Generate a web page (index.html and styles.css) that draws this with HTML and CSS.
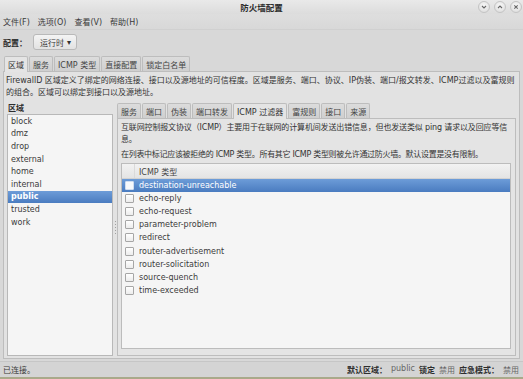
FILE: index.html
```html
<!DOCTYPE html>
<html lang="zh-CN">
<head>
<meta charset="utf-8">
<title>防火墙配置</title>
<link rel="stylesheet" href="styles.css">
</head>
<body>
<div class="window">
  <div class="titlebar">
    <span class="title">防火墙配置</span>
    <div class="wbtns">
      <span class="wbtn"><svg viewBox="0 0 10 10" width="10" height="10"><path d="M3 4 L5 6 L7 4" fill="none" stroke="#666" stroke-width="1.1"/></svg></span>
      <span class="wbtn"><svg viewBox="0 0 10 10" width="10" height="10"><path d="M3 6 L5 4 L7 6" fill="none" stroke="#666" stroke-width="1.1"/></svg></span>
      <span class="wbtn"><svg viewBox="0 0 10 10" width="10" height="10"><path d="M3.3 3.3 L6.7 6.7 M6.7 3.3 L3.3 6.7" fill="none" stroke="#666" stroke-width="1.1"/></svg></span>
    </div>
  </div>
  <div class="menubar">
    <span class="mi">文件(F)</span>
    <span class="mi">选项(O)</span>
    <span class="mi">查看(V)</span>
    <span class="mi">帮助(H)</span>
  </div>
  <div class="toolbar">
    <span class="lbl">配置：</span>
    <span class="combo">运行时 <span class="arrow">▾</span></span>
  </div>
  <div class="tabs">
    <span class="tab active">区域</span>
    <span class="tab">服务</span>
    <span class="tab">ICMP 类型</span>
    <span class="tab">直接配置</span>
    <span class="tab">锁定白名单</span>
  </div>
  <div class="panel">
    <p class="desc">FirewallD 区域定义了绑定的网络连接、接口以及源地址的可信程度。区域是服务、端口、协议、IP伪装、端口/报文转发、ICMP过滤以及富规则的组合。区域可以绑定到接口以及源地址。</p>
    <div class="paned">
      <div class="left">
        <div class="zlabel">区域</div>
        <div class="zlist">
          <div class="zrow">block</div>
          <div class="zrow">dmz</div>
          <div class="zrow">drop</div>
          <div class="zrow">external</div>
          <div class="zrow">home</div>
          <div class="zrow">internal</div>
          <div class="zrow sel">public</div>
          <div class="zrow">trusted</div>
          <div class="zrow">work</div>
        </div>
      </div>
      <div class="handle"><span class="grip"></span></div>
      <div class="right">
        <div class="tabs inner">
          <span class="tab">服务</span>
          <span class="tab">端口</span>
          <span class="tab">伪装</span>
          <span class="tab">端口转发</span>
          <span class="tab active">ICMP 过滤器</span>
          <span class="tab">富规则</span>
          <span class="tab">接口</span>
          <span class="tab">来源</span>
        </div>
        <div class="rpanel">
          <p class="rdesc">互联网控制报文协议（ICMP）主要用于在联网的计算机间发送出错信息，但也发送类似 ping 请求以及回应等信息。</p>
          <p class="rdesc2">在列表中标记应该被拒绝的 ICMP 类型。所有其它 ICMP 类型则被允许通过防火墙。默认设置是没有限制。</p>
          <div class="tree">
            <div class="thead"><span class="tcheck"></span><span class="tcol">ICMP 类型</span></div>
            <div class="trow sel"><span class="cb"></span>destination-unreachable</div>
            <div class="trow"><span class="cb"></span>echo-reply</div>
            <div class="trow"><span class="cb"></span>echo-request</div>
            <div class="trow"><span class="cb"></span>parameter-problem</div>
            <div class="trow"><span class="cb"></span>redirect</div>
            <div class="trow"><span class="cb"></span>router-advertisement</div>
            <div class="trow"><span class="cb"></span>router-solicitation</div>
            <div class="trow"><span class="cb"></span>source-quench</div>
            <div class="trow"><span class="cb"></span>time-exceeded</div>
          </div>
        </div>
      </div>
    </div>
  </div>
  <div class="statusbar">
    <span class="status">已连接。</span>
    <span class="sright"><b>默认区域：</b><span class="val">public</span><b>锁定</b><span class="val">禁用</span><b>应急模式：</b><span class="val">禁用</span></span>
  </div>
</div>
</body>
</html>
```

FILE: styles.css
```css
* { box-sizing: border-box; }
html, body { margin: 0; padding: 0; }
body {
  width: 523px;
  height: 379px;
  overflow: hidden;
  font-family: "DejaVu Sans", "Noto Sans CJK SC", sans-serif;
  font-size: 8px;
  color: #3a3a3a;
  background: #d6d6d6;
}
.window {
  width: 523px;
  height: 379px;
  display: flex;
  flex-direction: column;
  background: #d8d8d8;
  border-bottom: 2px solid #a9a98a;
}
.titlebar {
  height: 14px;
  flex: none;
  position: relative;
  display: flex;
  align-items: center;
  justify-content: center;
  background: linear-gradient(#e9e9e9, #dcdcdc);
}
.title { font-weight: bold; color: #2e2e2e; font-size: 8.5px; }
.wbtns {
  position: absolute;
  right: 1px;
  top: 1px;
  display: flex;
  gap: 4px;
}
.wbtn {
  width: 12px;
  height: 12px;
  border-radius: 50%;
  background: radial-gradient(circle at 50% 35%, #f8f8f8, #d9d9d9);
  border: 1px solid #c4c4c4;
  display: flex;
  align-items: center;
  justify-content: center;
}
.menubar {
  height: 16px;
  flex: none;
  display: flex;
  align-items: center;
  gap: 8px;
  padding-left: 3px;
  background: linear-gradient(#dedede, #d8d8d8);
  border-bottom: 1px solid #d0d0d0;
}
.toolbar {
  height: 24px;
  flex: none;
  display: flex;
  align-items: center;
  padding-left: 3px;
  gap: 6px;
}
.lbl { font-weight: bold; color: #2e2e2e; }
.combo {
  height: 16px;
  padding: 0 5px 0 6px;
  display: flex;
  align-items: center;
  gap: 3px;
  border: 1px solid #b9b9b9;
  border-radius: 3px;
  background: linear-gradient(#f4f4f4, #e2e2e2);
}
.arrow { font-size: 8px; color: #333; }
.tabs {
  height: 16px;
  flex: none;
  display: flex;
  align-items: flex-end;
  padding-left: 4px;
  gap: 1px;
  margin-top: 1px;
}
.tab {
  height: 15px;
  padding: 0 3px;
  display: flex;
  align-items: center;
  border: 1px solid #bdbdbd;
  border-bottom: none;
  border-radius: 2px 2px 0 0;
  background: linear-gradient(#dcdcdc, #cfcfcf);
  color: #444;
}
.tab.active {
  height: 16px;
  background: #e4e4e4;
  position: relative;
  top: 1px;
  color: #333;
}
.panel {
  flex: 1;
  margin: 0 3px 2px 3px;
  border: 1px solid #bdbdbd;
  background: #e2e2e2;
  display: flex;
  flex-direction: column;
  padding: 3px 2px 2px 2px;
}
.desc {
  margin: 0;
  line-height: 12px;
  color: #333;
}
.paned {
  flex: 1;
  display: flex;
  margin-top: 1px;
}
.left {
  width: 106px;
  flex: none;
  display: flex;
  flex-direction: column;
  margin-left: 1px;
}
.zlabel {
  height: 14px;
  font-weight: bold;
  display: flex;
  align-items: center;
  padding-left: 1px;
  color: #2e2e2e;
}
.zlist {
  flex: 1;
  border: 1px solid #b8b8b8;
  background: #f5f5f5;
  padding-top: 0;
}
.zrow {
  height: 12.6px;
  display: flex;
  align-items: center;
  padding-left: 3px;
  color: #3a3a3a;
}
.zrow.sel {
  background: linear-gradient(#6d9cd8, #4a7cc0);
  color: #fff;
  font-weight: bold;
}
.handle {
  width: 4px;
  flex: none;
  display: flex;
  align-items: center;
  justify-content: center;
}
.grip {
  width: 1px;
  height: 14px;
  background: repeating-linear-gradient(#a0a0a0 0 1px, transparent 1px 3px);
}
.right {
  flex: 1;
  display: flex;
  flex-direction: column;
  margin-right: 1px;
}
.tabs.inner {
  padding-left: 0;
  margin-top: 2px;
}
.rpanel {
  flex: 1;
  border: 1px solid #bdbdbd;
  background: #e4e4e4;
  padding: 3px 2px 6px 3px;
  display: flex;
  flex-direction: column;
}
.rdesc, .rdesc2 {
  margin: 0;
  line-height: 12px;
  color: #333;
}
.rdesc { letter-spacing: -0.15px; }
.rdesc2 { margin-top: 3px; letter-spacing: -0.3px; }
.tree {
  flex: 1;
  margin-top: 2px;
  margin-right: 2px;
  border: 1px solid #bcbcbc;
  background: #f5f5f5;
}
.thead {
  height: 15px;
  display: flex;
  align-items: center;
  background: linear-gradient(#f2f2f2, #e4e4e4);
  border-bottom: 1px solid #d2d2d2;
}
.tcheck {
  width: 13px;
  height: 100%;
  border-right: 1px solid #dadada;
}
.tcol { padding-left: 4px; color: #444; }
.trow {
  height: 13.1px;
  display: flex;
  align-items: center;
  padding-left: 3px;
  gap: 5px;
  color: #3c3c3c;
}
.trow.sel {
  background: linear-gradient(#6d9cd8, #4a7cc0);
  color: #fff;
}
.cb {
  width: 9px;
  height: 9px;
  border: 1px solid #a6a6a6;
  border-radius: 1px;
  background: linear-gradient(#ffffff, #ececec);
  flex: none;
}
.trow.sel .cb { border-color: #d0ddf0; background: #f7f9fc; }
.statusbar {
  height: 16px;
  flex: none;
  display: flex;
  align-items: center;
  justify-content: space-between;
  padding: 0 4px 0 3px;
  border-top: 1px solid #c6c6c6;
  background: #d4d4d4;
}
.sright { display: flex; gap: 4px; }
.sright b { font-weight: bold; color: #2e2e2e; }
.val { color: #666; }
```
